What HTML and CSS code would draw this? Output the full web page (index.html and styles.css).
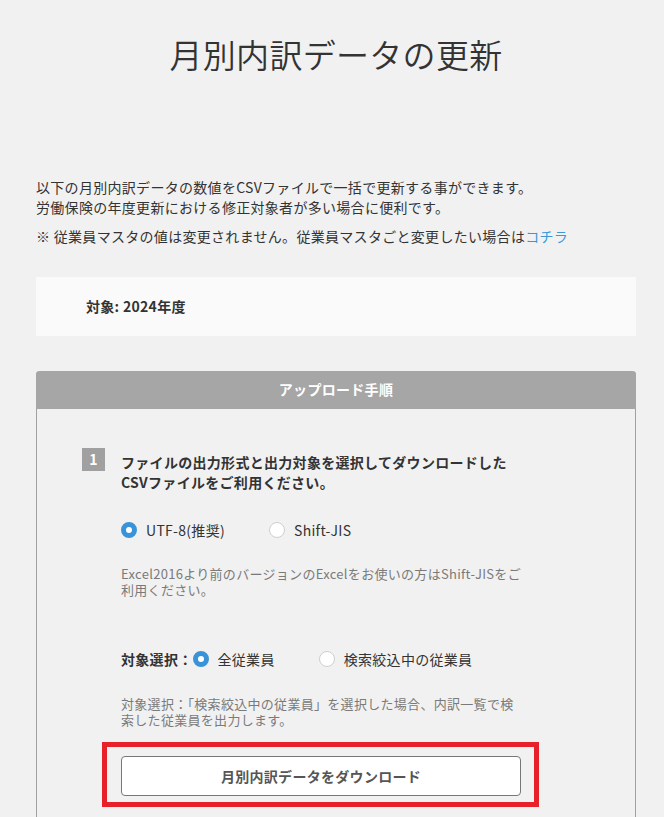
FILE: index.html
```html
<!DOCTYPE html>
<html lang="ja">
<head>
<meta charset="utf-8">
<title>月別内訳データの更新</title>
<link rel="stylesheet" href="styles.css">
</head>
<body>
<div class="page">
  <h1 class="title">月別内訳データの更新</h1>

  <p class="intro">以下の月別内訳データの数値をCSVファイルで一括で更新する事ができます。<br>労働保険の年度更新における修正対象者が多い場合に便利です。</p>
  <p class="notice">※ 従業員マスタの値は変更されません。従業員マスタごと変更したい場合は<a class="link" href="#">コチラ</a></p>

  <div class="target">対象: 2024年度</div>

  <section class="panel">
    <div class="panel-head">アップロード手順</div>
    <div class="panel-body">
      <div class="step">
        <span class="badge">1</span>
        <div class="step-content">
          <p class="step-text">ファイルの出力形式と出力対象を選択してダウンロードしたCSVファイルをご利用ください。</p>

          <div class="radio-row">
            <label class="option"><span class="radio checked"></span>UTF-8(推奨)</label>
            <label class="option"><span class="radio"></span>Shift-JIS</label>
          </div>
          <p class="hint hint-1">Excel2016より前のバージョンのExcelをお使いの方はShift-JISをご利用ください。</p>

          <div class="radio-row row-target">
            <span class="row-label">対象選択：</span>
            <label class="option"><span class="radio checked"></span>全従業員</label>
            <label class="option"><span class="radio"></span>検索絞込中の従業員</label>
          </div>
          <p class="hint hint-2">対象選択：「検索絞込中の従業員」を選択した場合、内訳一覧で検索した従業員を出力します。</p>

          <div class="highlight">
            <button class="download" type="button">月別内訳データをダウンロード</button>
          </div>
        </div>
      </div>
    </div>
  </section>
</div>
</body>
</html>
```

FILE: styles.css
```css
* { box-sizing: border-box; }

html, body {
  margin: 0;
  padding: 0;
  background: #f1f1f1;
}

body {
  font-family: "Noto Sans CJK JP", "Noto Sans", sans-serif;
  color: #333;
  font-size: 14px;
  letter-spacing: 0.3px;
}

.page {
  width: 600px;
  margin-left: 36px;
  padding-top: 30px;
}

.title {
  margin: 0;
  font-size: 33px;
  line-height: 48px;
  font-weight: 350;
  letter-spacing: 0.3px;
  text-align: center;
  color: #333;
}

.intro {
  margin: 99px 0 0;
  line-height: 20px;
}

.notice {
  margin: 9px 0 0;
  line-height: 20px;
}

.link {
  color: #3a97d8;
  text-decoration: none;
}

.target {
  margin-top: 31px;
  background: #fafafa;
  height: 59px;
  padding: 19px 0 0 50px;
  line-height: 20px;
  font-weight: 700;
}

.panel {
  margin-top: 35px;
  border: 1px solid #a0a0a0;
  border-top: none;
  border-radius: 4px 4px 0 0;
  padding-bottom: 40px;
}

.panel-head {
  background: #a6a6a6;
  color: #fff;
  font-weight: 700;
  height: 38px;
  line-height: 36px;
  text-align: center;
  border-radius: 4px 4px 0 0;
  margin: 0 -1px;
}

.panel-body {
  padding: 39px 0 0 45px;
}

.step {
  display: flex;
  align-items: flex-start;
  gap: 16px;
}

.badge {
  flex: none;
  width: 23px;
  height: 23px;
  background: #a0a0a0;
  color: #fff;
  font-weight: 700;
  font-size: 14px;
  line-height: 23px;
  text-align: center;
  letter-spacing: 0;
}

.step-content {
  width: 400px;
}

.step-text {
  margin: 4px 0 0;
  line-height: 20px;
  font-weight: 700;
}

.radio-row {
  display: flex;
  align-items: center;
  height: 20px;
  margin-top: 28px;
}

.row-target {
  margin-top: 51px;
}

.row-label {
  font-weight: 700;
}

.option {
  display: flex;
  align-items: center;
  margin-right: 44px;
  line-height: 20px;
}

.radio {
  width: 16px;
  height: 16px;
  border-radius: 50%;
  border: 1px solid #cfcfcf;
  background: #fff;
  margin-right: 9px;
  flex: none;
}

.radio.checked {
  border: 5px solid #3a93d8;
}

.hint {
  margin: 26px 0 0;
  font-size: 13px;
  line-height: 16px;
  color: #7a7a7a;
}

.hint-2 {
  margin-top: 27px;
}

.highlight {
  margin: 14px 0 0 -19px;
  width: 437px;
  border: 5px solid #e8202a;
  padding: 9px 13px 6px 14px;
}

.download {
  display: block;
  width: 400px;
  height: 40px;
  background: #fff;
  border: 1px solid #777;
  border-radius: 4px;
  font-family: "Noto Sans CJK JP", "Noto Sans", sans-serif;
  font-size: 14px;
  font-weight: 700;
  letter-spacing: 0.3px;
  color: #555;
  padding: 0;
}
```
